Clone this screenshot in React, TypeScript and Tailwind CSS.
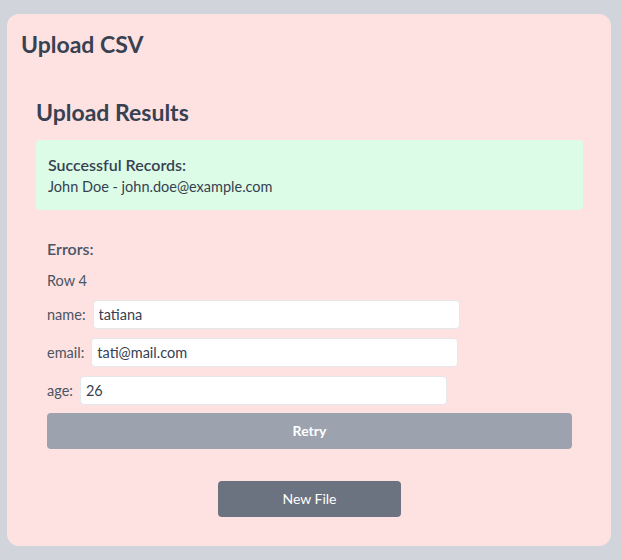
import React, { useState } from 'react';

type ErrorRow = {
  row: number;
  fields: { key: string; value: string }[];
};

export default function App() {
  const [errorRows, setErrorRows] = useState<ErrorRow[]>([
    {
      row: 4,
      fields: [
        { key: 'name', value: 'tatiana' },
        { key: 'email', value: 'tati@mail.com' },
        { key: 'age', value: '26' },
      ],
    },
  ]);

  // update a field value inside an error row
  const handleChange = (row: number, key: string, value: string) => {
    setErrorRows(
      errorRows.map((r) =>
        r.row === row
          ? { ...r, fields: r.fields.map((f) => (f.key === key ? { ...f, value } : f)) }
          : r
      )
    );
  };

  return (
    <div
      className="min-h-screen bg-[#d1d5db] pl-[7px] pr-[11px] pt-[14px] pb-[15px] text-[#374151]"
      style={{ fontFamily: 'Lato, "Noto Sans", sans-serif' }}
    >
      <div className="bg-[#fee2e2] rounded-xl px-[14px] pt-[14px] pb-[29px]">
        <h1 className="text-[23px] font-bold leading-8">Upload CSV</h1>

        <div className="ml-[15px] w-[547px] mt-[36px]">
          <h2 className="text-[23px] font-bold leading-8 mb-3">Upload Results</h2>

          {/* Successful records */}
          <div className="bg-[#dcfce7] rounded px-3 py-[13px]">
            <p className="text-base font-semibold leading-6">Successful Records:</p>
            <p className="text-[14.5px] leading-5">John Doe - john.doe@example.com</p>
          </div>

          {/* Errors */}
          <div className="mx-[11px] mt-[27px]">
            <p className="text-base font-semibold leading-6 text-[#4b5563]">Errors:</p>
            {errorRows.map((r) => (
              <div key={r.row} className="mt-[10px]">
                <p className="text-[14.5px] leading-5 text-[#4b5563] mb-[9px]">Row {r.row}</p>
                <div className="flex flex-col gap-[9px] mb-2">
                  {r.fields.map((f) => (
                    <div key={f.key} className="flex items-center gap-[7px]">
                      <label className="text-[14.5px] text-[#4b5563]">{f.key}:</label>
                      <input
                        type="text"
                        value={f.value}
                        onChange={(e) => handleChange(r.row, f.key, e.target.value)}
                        className="w-[367px] h-[29px] bg-white border border-[#e5e7eb] rounded px-[5px] text-[14.5px] text-[#374151] outline-none"
                      />
                    </div>
                  ))}
                </div>
                <button className="w-full h-9 bg-[#9ca3af] text-white text-sm font-bold rounded">
                  Retry
                </button>
              </div>
            ))}
          </div>

          <div className="flex justify-center mt-8">
            <button className="w-[183px] h-9 bg-[#6b7280] text-white text-sm rounded">
              New File
            </button>
          </div>
        </div>
      </div>
    </div>
  );
}
